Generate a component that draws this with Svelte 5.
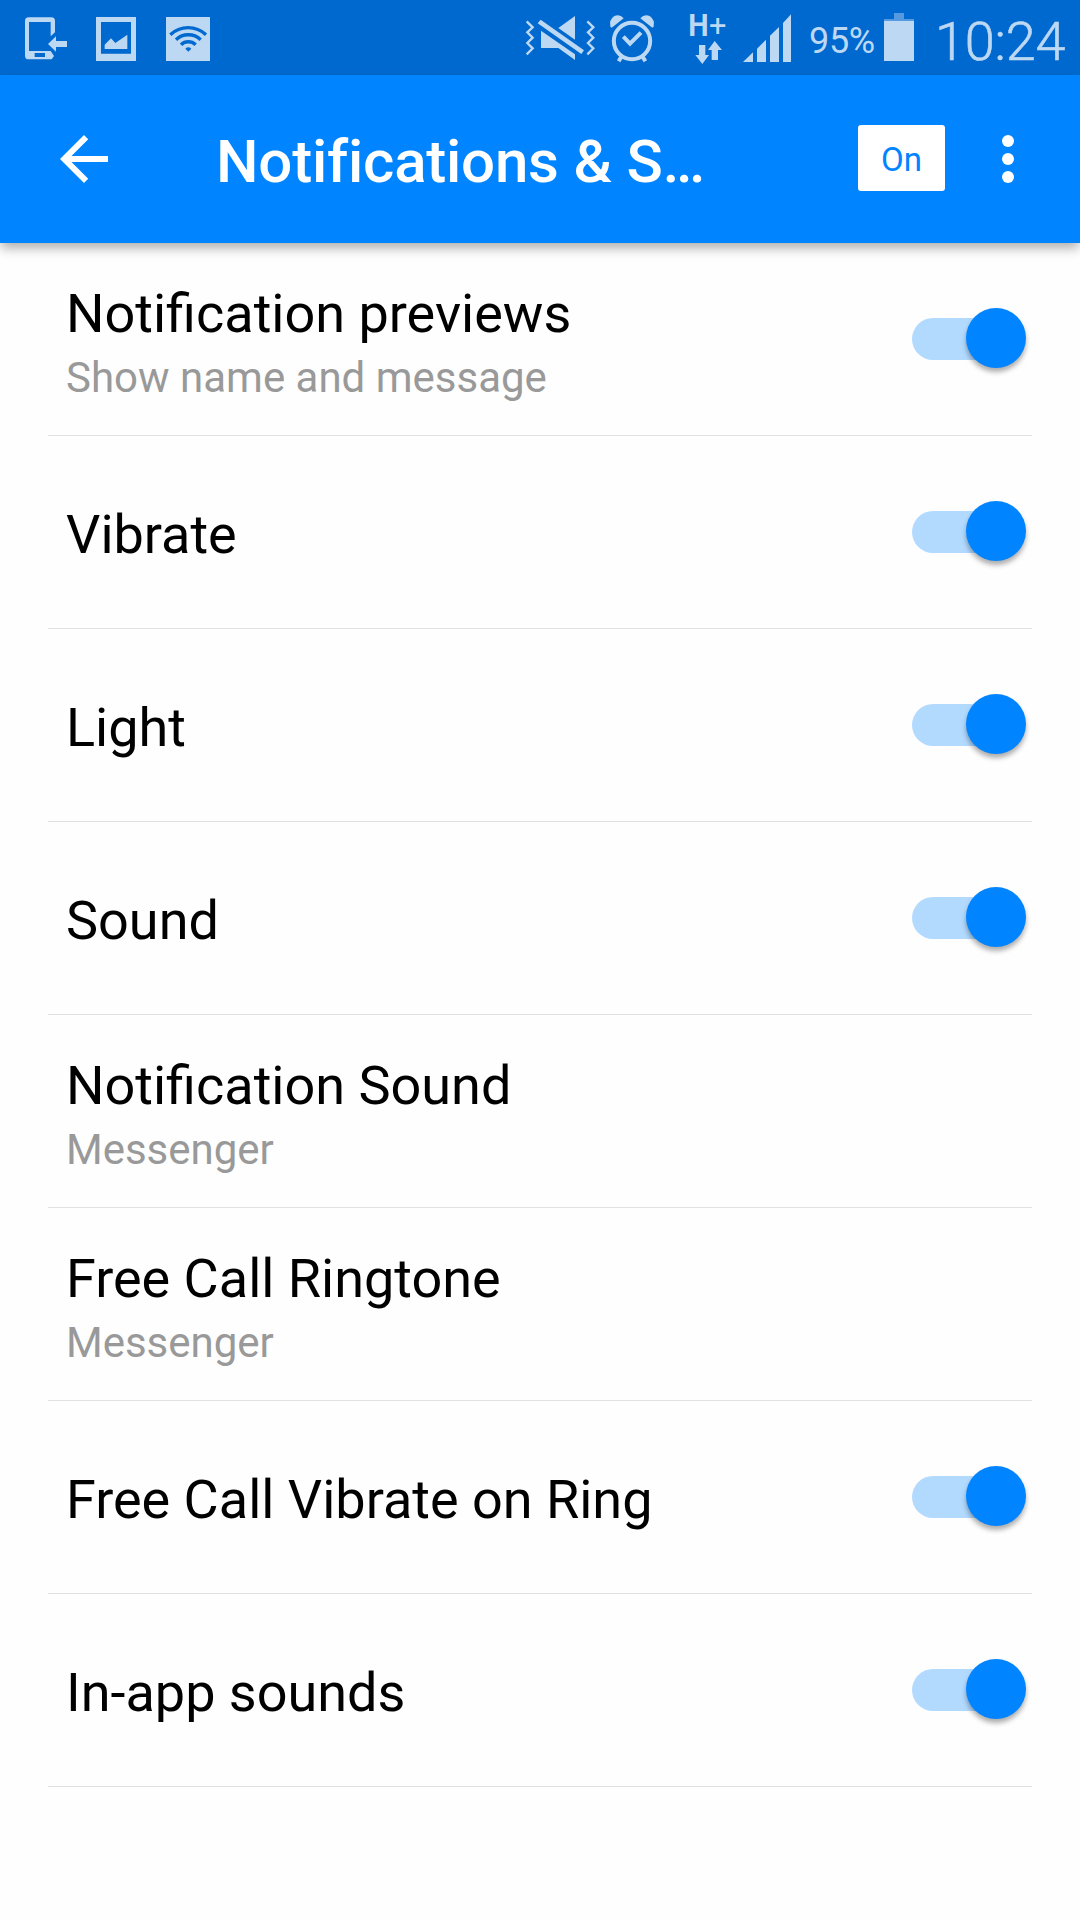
<script lang="ts">
  interface Setting {
    title: string
    detail?: string
    enabled?: boolean
  }

  let settings: Setting[] = $state([
    { title: 'Notification previews', detail: 'Show name and message', enabled: true },
    { title: 'Vibrate', enabled: true },
    { title: 'Light', enabled: true },
    { title: 'Sound', enabled: true },
    { title: 'Notification Sound', detail: 'Messenger' },
    { title: 'Free Call Ringtone', detail: 'Messenger' },
    { title: 'Free Call Vibrate on Ring', enabled: true },
    { title: 'In-app sounds', enabled: true },
  ])

  function toggle(setting: Setting) {
    setting.enabled = !setting.enabled
  }
</script>

<div class="screen">
  <div class="status-bar">
    <svg class="phone" viewBox="72 0 132 225">
      <path
        fill-rule="evenodd"
        d="M86 52H154Q165 52 165 63V97L152 109V66H87V153H152L162 168L155 178H86Q75 178 75 167V63Q75 52 86 52ZM104 159V171H135V159Z"
      />
      <path d="M144 132L168 109V123H201V141H168V155Z" />
    </svg>
    <svg class="image" viewBox="288 0 120 225">
      <path fill-rule="evenodd" d="M288 51H408V183H288ZM303 66V161H393V66Z" />
      <path d="M314 147V134L333 115L346 129L382 104V147Z" />
    </svg>
    <svg class="wifi" viewBox="498 0 132 225">
      <path d="M498 51H630V183H498Z" />
      <g class="cut">
        <path d="M511 104A78 78 0 0 1 618 104" />
        <path d="M528 119A54 54 0 0 1 602 119" />
        <path d="M543 134A32 32 0 0 1 587 134" />
      </g>
      <path class="cut-fill" d="M556 146Q565 138 574 146L565 155Z" />
    </svg>

    <svg class="mute" viewBox="45 0 213 225">
      <g class="zigzag">
        <path d="M50 64L68 82L52 97L68 113L52 129L68 145L50 163" />
        <path d="M232 64L250 82L234 97L250 113L234 129L250 145L232 163" />
      </g>
      <path d="M195 48V119L145 84Z" />
      <path d="M93 92L195 163V180L145 144H93Z" />
      <path d="M92 59L222 151L214 162L83 70Z" />
    </svg>
    <svg class="alarm" viewBox="297 0 138 225">
      <g class="line">
        <circle cx="366" cy="123" r="54.5" />
        <path d="M334 170L326 184M398 170L406 184" />
        <path d="M340 110L360 131L393 98" />
      </g>
      <path d="M305 83L341 55Q328 40 312 49Q297 60 301 79Z" />
      <path d="M427 83L391 55Q404 40 420 49Q435 60 431 79Z" />
    </svg>
    <svg class="network" viewBox="537 0 111 225">
      <text class="network-h" x="535" y="108" textLength="61" lengthAdjust="spacingAndGlyphs">H</text>
      <text class="network-plus" x="597" y="107">+</text>
      <path d="M567 135H586V165H597L577 192L556 165H567Z" />
      <path d="M614 123L636 150H624V180H605V150H594Z" />
    </svg>
    <svg class="signal" viewBox="699 0 144 225">
      <path d="M699 186L729 157V186Z" />
      <path d="M741 186V146L768 119V186Z" />
      <path d="M780 186V107L807 81V186Z" />
      <path d="M819 186V69L843 43V186Z" />
    </svg>
    <span class="percent">95%</span>
    <svg class="battery" viewBox="282 0 90 225">
      <path opacity="0.45" d="M312 39H342V57H372V63H282V57H312Z" />
      <path d="M282 63H372V183H282Z" />
    </svg>
    <span class="clock">10:24</span>
  </div>

  <header class="app-bar">
    <button class="back" aria-label="Back">
      <svg viewBox="0 0 24 24">
        <path d="M20 11H7.83l5.59-5.59L12 4l-8 8 8 8 1.41-1.41L7.83 13H20v-2z" />
      </svg>
    </button>
    <h1>Notifications &amp; S…</h1>
    <button class="master">On</button>
    <button class="menu" aria-label="More options">
      <svg viewBox="0 0 24 24">
        <circle cx="12" cy="6" r="2" />
        <circle cx="12" cy="12" r="2" />
        <circle cx="12" cy="18" r="2" />
      </svg>
    </button>
  </header>

  <ul>
    {#each settings as setting}
      <li>
        <div class="text">
          <span class="title">{setting.title}</span>
          {#if setting.detail}
            <span class="detail">{setting.detail}</span>
          {/if}
        </div>
        {#if setting.enabled !== undefined}
          <button
            class="switch"
            class:on={setting.enabled}
            role="switch"
            aria-checked={setting.enabled}
            aria-label={setting.title}
            onclick={() => toggle(setting)}
          >
            <span class="knob"></span>
          </button>
        {/if}
      </li>
    {/each}
  </ul>
</div>

<style>
  :global(body) {
    margin: 0;
    background: #fefefe;
  }

  .screen {
    width: 1080px;
    height: 1920px;
    overflow: hidden;
    background: #fefefe;
    font-family: Roboto, 'Noto Sans', sans-serif;
  }

  button {
    padding: 0;
    border: 0;
    background: none;
    font-family: inherit;
  }

  svg {
    display: block;
    flex: none;
  }

  .status-bar {
    display: flex;
    height: 75px;
    background: #0069cf;
    color: #bdd8f3;
  }

  .status-bar svg {
    height: 75px;
    fill: #bdd8f3;
  }

  .phone {
    width: 44px;
    margin-left: 24px;
  }

  .image {
    width: 40px;
    margin-left: 28px;
  }

  .wifi {
    width: 44px;
    margin-left: 30px;
  }

  .status-bar .cut {
    fill: none;
    stroke: #0069cf;
    stroke-width: 10;
  }

  .status-bar .cut-fill {
    fill: #0069cf;
  }

  .mute {
    width: 71px;
    margin-left: 315px;
  }

  .zigzag {
    fill: none;
    stroke: #bdd8f3;
    stroke-width: 7;
  }

  .alarm {
    width: 46px;
    margin-left: 13px;
  }

  .line {
    fill: none;
    stroke: #bdd8f3;
    stroke-width: 12;
  }

  .network {
    width: 37px;
    margin-left: 34px;
  }

  .network-h {
    font-size: 96px;
    font-weight: 700;
  }

  .network-plus {
    font-size: 92px;
  }

  .signal {
    width: 48px;
    margin-left: 17px;
  }

  .percent {
    width: 75px;
    margin-left: 18px;
    font-size: 36px;
    letter-spacing: -0.3px;
    line-height: 83px;
  }

  .battery {
    width: 30px;
  }

  .clock {
    margin-left: 21px;
    font-size: 54px;
    font-weight: 300;
    letter-spacing: -0.2px;
    line-height: 84px;
    white-space: nowrap;
    -webkit-text-stroke: 0.6px #bdd8f3;
  }

  .app-bar {
    position: relative;
    display: flex;
    align-items: center;
    height: 168px;
    background: #0084ff;
    box-shadow: 0 6px 11px -1px rgba(0, 0, 0, 0.32);
  }

  .app-bar svg {
    width: 72px;
    height: 72px;
    fill: #fff;
  }

  .back {
    margin-left: 48px;
  }

  h1 {
    width: 642px;
    margin: 6px 0 0 96px;
    color: #fff;
    font-size: 60px;
    font-weight: 500;
    letter-spacing: -0.22px;
    line-height: 72px;
    white-space: nowrap;
    font-variant-ligatures: common-ligatures;
  }

  .master {
    width: 87px;
    height: 66px;
    margin-top: -2px;
    padding-top: 3px;
    border-radius: 3px;
    background: #fff;
    color: #0084ff;
    font-size: 33px;
    line-height: 63px;
  }

  .menu {
    margin-left: 27px;
  }

  ul {
    margin: 0;
    padding: 0 48px;
    list-style: none;
  }

  li {
    display: flex;
    align-items: center;
    justify-content: space-between;
    box-sizing: border-box;
    height: 193px;
    padding: 0 5px 0 18px;
    border-bottom: 1px solid #e1e1e1;
  }

  .text {
    display: flex;
    flex-direction: column;
    padding-top: 6px;
  }

  .title {
    color: #000;
    font-size: 54px;
    line-height: 70px;
    white-space: nowrap;
  }

  .detail {
    margin-bottom: -2px;
    color: #999;
    font-size: 42px;
    line-height: 58px;
    white-space: nowrap;
  }

  .switch {
    display: flex;
    align-items: center;
    width: 103px;
    height: 42px;
    margin-right: 12px;
    border-radius: 21px;
    background: #b9b9b9;
  }

  .switch.on {
    justify-content: flex-end;
    background: #b2daff;
  }

  .knob {
    flex: none;
    width: 60px;
    height: 60px;
    margin: 0 -11px 2px 0;
    border-radius: 50%;
    background: #f1f1f1;
    box-shadow: 0 4px 5px rgba(0, 0, 0, 0.32);
  }

  .on .knob {
    background: #0084ff;
  }
</style>
